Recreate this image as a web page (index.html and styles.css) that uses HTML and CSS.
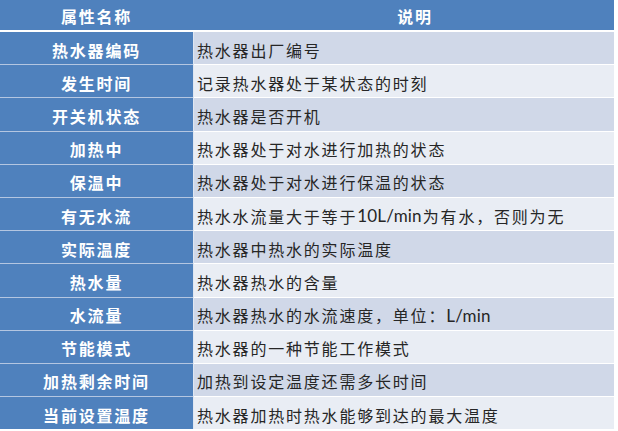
FILE: index.html
```html
<!DOCTYPE html>
<html lang="zh-CN">
<head>
<meta charset="utf-8">
<title>属性说明</title>
<link rel="stylesheet" href="styles.css">
</head>
<body>
<div class="tbl">
  <div class="row head">
    <div class="name">属性名称</div>
    <div class="desc">说明</div>
  </div>
  <div class="row odd"><div class="name">热水器编码</div><div class="desc">热水器出厂编号</div></div>
  <div class="row even"><div class="name">发生时间</div><div class="desc">记录热水器处于某状态的时刻</div></div>
  <div class="row odd"><div class="name">开关机状态</div><div class="desc">热水器是否开机</div></div>
  <div class="row even"><div class="name">加热中</div><div class="desc">热水器处于对水进行加热的状态</div></div>
  <div class="row odd"><div class="name">保温中</div><div class="desc">热水器处于对水进行保温的状态</div></div>
  <div class="row even"><div class="name">有无水流</div><div class="desc">热水水流量大于等于<span class="lat">10L/min</span>为有水，否则为无</div></div>
  <div class="row odd"><div class="name">实际温度</div><div class="desc">热水器中热水的实际温度</div></div>
  <div class="row even"><div class="name">热水量</div><div class="desc">热水器热水的含量</div></div>
  <div class="row odd"><div class="name">水流量</div><div class="desc">热水器热水的水流速度，单位：<span class="lat">L/min</span></div></div>
  <div class="row even"><div class="name">节能模式</div><div class="desc">热水器的一种节能工作模式</div></div>
  <div class="row odd"><div class="name">加热剩余时间</div><div class="desc">加热到设定温度还需多长时间</div></div>
  <div class="row even"><div class="name">当前设置温度</div><div class="desc">热水器加热时热水能够到达的最大温度</div></div>
</div>
</body>
</html>
```
FILE: styles.css
```css
html, body {
  margin: 0;
  padding: 0;
  background: #ffffff;
}

.tbl {
  width: 614px;
  font-family: "Noto Sans CJK SC", sans-serif;
  font-size: 16px;
  letter-spacing: 1.8px;
}

.row {
  display: grid;
  grid-template-columns: 193px 420px;
  column-gap: 1px;
  background: #dfe6f1;
}

.name,
.desc {
  display: flex;
  align-items: center;
  box-sizing: border-box;
  height: 33.2px;
  padding-top: 3px;
  border-top: 1px solid #ffffff;
  white-space: nowrap;
}

.name {
  justify-content: center;
  background: #4f81bd;
  color: #ffffff;
  font-weight: 700;
  border-top-color: #b4c6e1;
}

.desc {
  padding-left: 3px;
  color: #262626;
}

.lat {
  font-family: "Lato", sans-serif;
  font-size: 17px;
  letter-spacing: 0.2px;
  margin-right: 1px;
}

.odd .desc {
  background: #d0d8e8;
}

.even .desc {
  background: #e9edf4;
}

.head {
  background: #4f81bd;
  margin-bottom: 2px;
}

.head .name,
.head .desc {
  height: 30px;
  padding-top: 1px;
  border-top: none;
  background: #4f81bd;
  color: #ffffff;
  font-weight: 700;
}

.head .desc {
  justify-content: center;
  padding-left: 22px;
}

.odd:nth-child(2) .name,
.odd:nth-child(2) .desc {
  border-top: none;
  height: 32.2px;
}
```
